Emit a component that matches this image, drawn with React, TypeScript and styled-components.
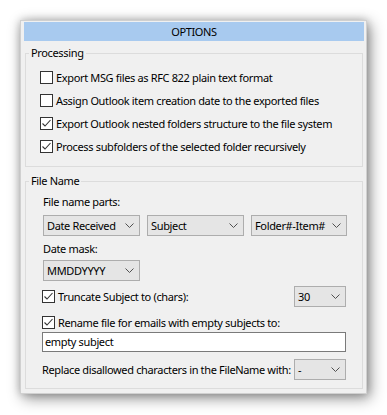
import React from 'react';
import styled, { createGlobalStyle } from 'styled-components';

const GlobalStyle = createGlobalStyle`
  * {
    box-sizing: border-box;
  }
  html,
  body {
    margin: 0;
    background: #ffffff;
  }
  body {
    font-family: 'Noto Sans', 'Liberation Sans', sans-serif;
    font-size: 11px;
    letter-spacing: -0.35px;
    color: #000000;
  }
`;

const processingOptions = [
  { label: 'Export MSG files as RFC 822 plain text format', checked: false },
  { label: 'Assign Outlook item creation date to the exported files', checked: false },
  { label: 'Export Outlook nested folders structure to the file system', checked: true },
  { label: 'Process subfolders of the selected folder recursively', checked: true },
];

const nameParts = ['Date Received', 'Subject', 'Folder#-Item#'];

const CheckBox: React.FC<{ checked: boolean }> = ({ checked }) => (
  <Box>
    {checked && (
      <svg width="11" height="11" viewBox="0 0 11 11">
        <polyline points="1.5,5.5 4,8 9.5,2" fill="none" stroke="#333" strokeWidth="1.1" />
      </svg>
    )}
  </Box>
);

const Dropdown: React.FC<{ value: string; width?: number }> = ({ value, width }) => (
  <Select $width={width}>
    <span>{value}</span>
    <svg width="9" height="5" viewBox="0 0 9 5">
      <polyline points="0.5,0.5 4.5,4.5 8.5,0.5" fill="none" stroke="#505050" strokeWidth="1" />
    </svg>
  </Select>
);

const App: React.FC = () => {
  return (
    <Page>
      <GlobalStyle />
      <Window>
        <TitleBar>OPTIONS</TitleBar>
        <Group $top={5}>
          <Legend>Processing</Legend>
          <ProcessingBody>
            {processingOptions.map((opt) => (
              <CheckRow key={opt.label}>
                <CheckBox checked={opt.checked} />
                <span>{opt.label}</span>
              </CheckRow>
            ))}
          </ProcessingBody>
        </Group>
        <Group $top={7}>
          <Legend>File Name</Legend>
          <FileNameBody>
            <Label>File name parts:</Label>
            <PartsRow>
              {nameParts.map((p) => (
                <Dropdown key={p} value={p} />
              ))}
            </PartsRow>
            <Label $top={6}>Date mask:</Label>
            <SingleRow $top={4}>
              <Dropdown value="MMDDYYYY" width={97} />
            </SingleRow>
            <SpreadRow $top={5}>
              <CheckRow $height={21}>
                <CheckBox checked />
                <span>Truncate Subject to (chars):</span>
              </CheckRow>
              <Dropdown value="30" width={52} />
            </SpreadRow>
            <CheckRow $height={14} $top={8}>
              <CheckBox checked />
              <span>Rename file for emails with empty subjects to:</span>
            </CheckRow>
            <TextInput>empty subject</TextInput>
            <SpreadRow $top={7}>
              <span>Replace disallowed characters in the FileName with:</span>
              <Dropdown value="-" width={52} />
            </SpreadRow>
          </FileNameBody>
        </Group>
      </Window>
    </Page>
  );
};

export default App;

const Page = styled('div')`
  padding: 20px 0 20px 20px;
`;

const Window = styled('div')`
  width: 347px;
  background: #f0f0f0;
  border: 1px solid #d0d0d0;
  padding: 1px 2px 4px 3px;
  box-shadow: 3px 4px 14px rgba(0, 0, 0, 0.45), 0 0 8px rgba(0, 0, 0, 0.2);
`;

const TitleBar = styled('div')`
  height: 19px;
  line-height: 19px;
  background: #a8caef;
  text-align: center;
`;

const Group = styled('fieldset')<{ $top: number }>`
  margin: ${({ $top }) => $top}px 1px 0;
  padding: 0;
  border: 1px solid #dcdcdc;
  min-width: 0;
`;

const Legend = styled('legend')`
  margin-left: 3px;
  padding: 0 2px;
  line-height: 14px;
`;

const ProcessingBody = styled('div')`
  padding: 6px 0 8px 14px;
`;

const FileNameBody = styled('div')`
  display: flex;
  flex-direction: column;
  padding: 7px 16px 8px 16px;
`;

const CheckRow = styled('label')<{ $height?: number; $top?: number }>`
  display: flex;
  align-items: center;
  gap: 3px;
  height: ${({ $height }) => $height ?? 23}px;
  margin-top: ${({ $top }) => $top ?? 0}px;
  white-space: nowrap;
`;

const Box = styled('span')`
  flex: none;
  display: flex;
  align-items: center;
  justify-content: center;
  width: 13px;
  height: 13px;
  background: #ffffff;
  border: 1px solid #333333;
`;

const Label = styled('div')<{ $top?: number }>`
  line-height: 14px;
  margin-top: ${({ $top }) => $top ?? 0}px;
  padding-left: 1px;
`;

const PartsRow = styled('div')`
  display: grid;
  grid-template-columns: 97px 97px 96px;
  column-gap: 7px;
  margin-top: 6px;
  padding-left: 1px;
`;

const SingleRow = styled('div')<{ $top: number }>`
  display: flex;
  margin-top: ${({ $top }) => $top}px;
  padding-left: 1px;
`;

const SpreadRow = styled('div')<{ $top: number }>`
  display: flex;
  align-items: center;
  justify-content: space-between;
  margin-top: ${({ $top }) => $top}px;
  white-space: nowrap;
`;

const Select = styled('div')<{ $width?: number }>`
  flex: none;
  display: flex;
  align-items: center;
  justify-content: space-between;
  width: ${({ $width }) => ($width ? `${$width}px` : 'auto')};
  height: 21px;
  padding: 0 5px 0 3px;
  background: #e5e5e5;
  border: 1px solid #adadad;
  white-space: nowrap;
  overflow: hidden;

  & svg {
    flex: none;
    margin-left: 4px;
  }
`;

const TextInput = styled('div')`
  height: 20px;
  margin-top: 3px;
  padding: 0 2px;
  line-height: 18px;
  background: #ffffff;
  border: 1px solid #7a7a7a;
`;
